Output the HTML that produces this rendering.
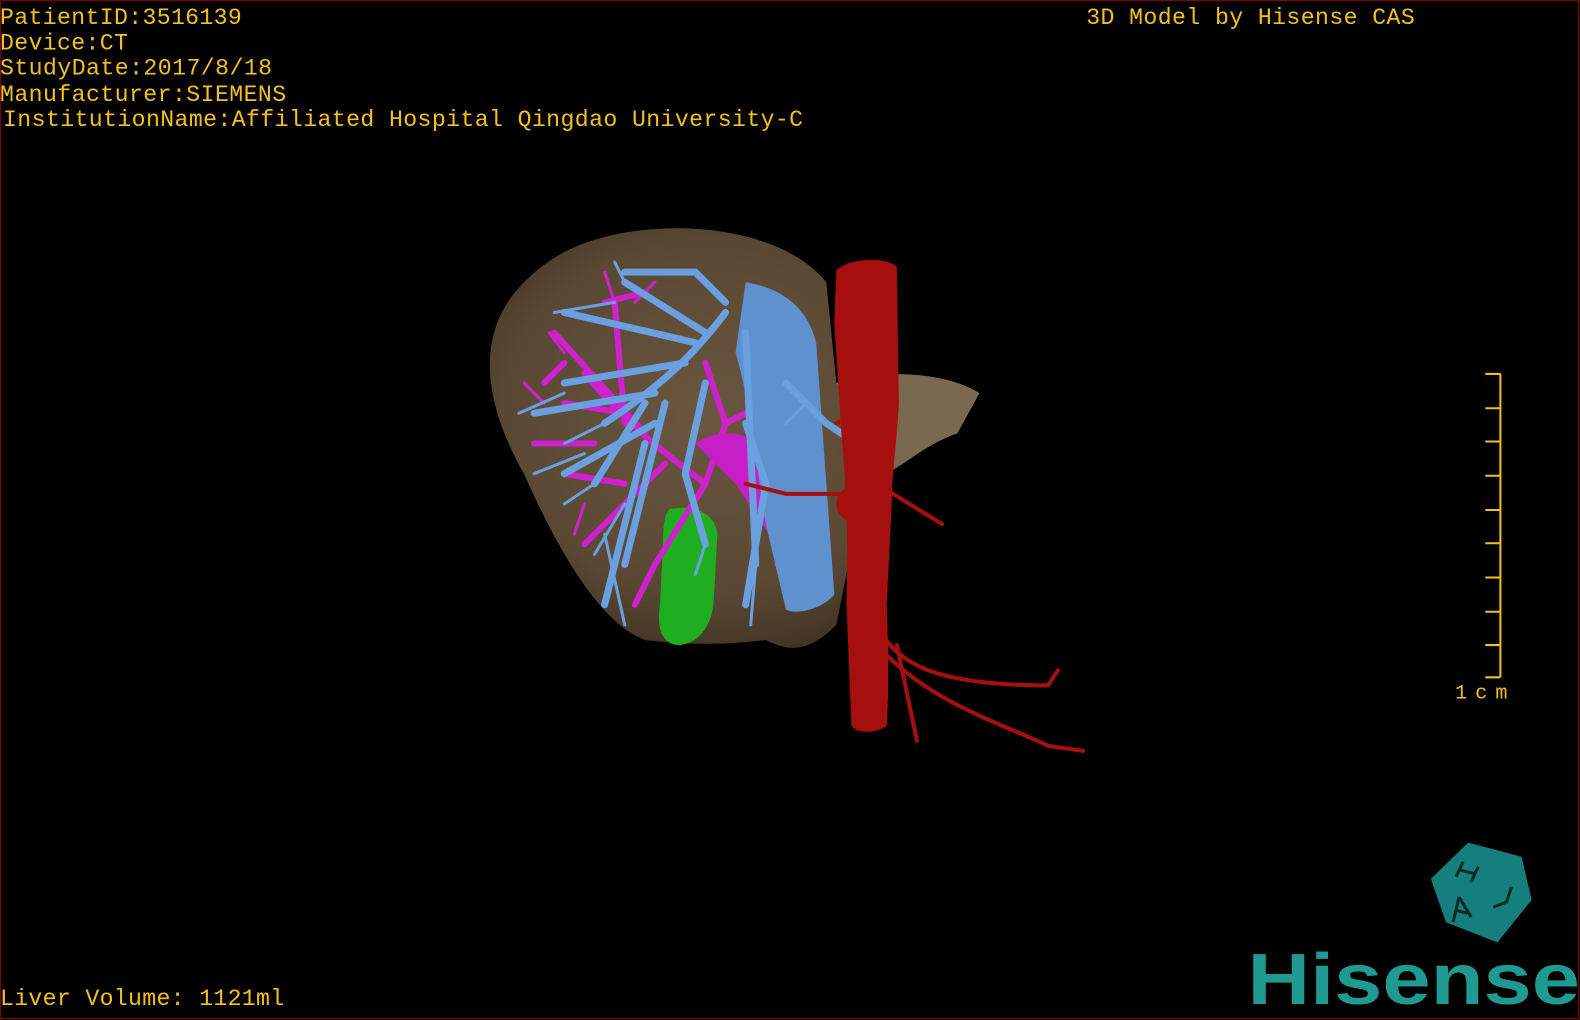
<!DOCTYPE html>
<html><head><meta charset="utf-8"><style>
html,body{margin:0;padding:0;background:#000;width:1580px;height:1020px;overflow:hidden}
svg{display:block}
</style></head><body>
<svg width="1580" height="1020" viewBox="0 0 1568 1012" preserveAspectRatio="none" xmlns="http://www.w3.org/2000/svg">
<defs>
<radialGradient id="lg" cx="0.45" cy="0.45" r="0.6">
<stop offset="0" stop-color="#6b5740"/>
<stop offset="0.7" stop-color="#5a4834"/>
<stop offset="1" stop-color="#3e3122"/>
</radialGradient>
</defs>
<rect x="0" y="0" width="1568" height="1012" fill="#000"/>
<rect x="0.5" y="0.5" width="1566" height="1010" fill="none" stroke="#6a0a0a" stroke-width="1.5"/>
<g font-family="Liberation Mono, monospace" font-size="23" fill="#f2c21b">
<text x="0" y="24" textLength="240">PatientID:3516139</text>
<text x="0" y="49" textLength="127">Device:CT</text>
<text x="0" y="74" textLength="270">StudyDate:2017/8/18</text>
<text x="0" y="100" textLength="284">Manufacturer:SIEMENS</text>
<text x="3" y="125" textLength="794">InstitutionName:Affiliated Hospital Qingdao University-C</text>
<text x="1078" y="24" textLength="326">3D Model by Hisense CAS</text>
<text x="0" y="997" textLength="282">Liver Volume: 1121ml</text>
<text x="1444" y="693" font-size="20" textLength="52">1cm</text>
</g>
<g stroke="#f2c21b" stroke-width="2" fill="none">
<path d="M1489 371V672"/>
<path d="M1474 371H1489M1474 405H1489M1474 438H1489M1474 472H1489M1474 506H1489M1474 539H1489M1474 573H1489M1474 607H1489M1474 640H1489M1474 672H1489"/>
</g>
<!-- liver -->
<path d="M600 235 C680 215 780 230 820 280 L830 380 C880 365 940 370 972 390 L950 430 C920 440 900 460 880 470 L850 520 830 620 C800 650 780 645 760 635 C720 640 680 640 640 635 C600 620 560 560 520 470 C480 400 470 330 520 280 C545 255 570 243 600 235Z" fill="url(#lg)"/>
<path d="M830 380 C880 365 940 370 972 390 L950 430 C920 440 900 460 885 465 Z" fill="#7a6850"/>
<!-- green -->
<path d="M665 505 C690 500 710 510 712 530 L708 600 C705 625 690 640 672 640 C655 638 652 620 655 600 L658 540 C658 520 660 508 665 505Z" fill="#1fae1f"/>
<!-- magenta vessels -->
<g stroke="#d020d0" stroke-width="6" fill="none" stroke-linecap="round">
<path d="M700 480 C660 450 620 420 580 370 M640 430 L550 330 M620 410 L560 400 M660 460 L600 520 L580 540 M620 480 L560 470 M700 480 L720 420 L760 400 M720 420 L700 360 M700 480 L650 560 L630 600 M760 500 L800 540 M740 440 L790 520 M600 300 L640 290 M560 360 L540 380 M620 420 L610 300 M590 440 L530 440"/>
</g>
<g stroke="#d020d0" stroke-width="3" fill="none" stroke-linecap="round">
<path d="M610 300 L600 270 M630 300 L650 280 M560 350 L545 330 M540 400 L520 380 M580 500 L570 530 M800 540 L810 560 M770 560 L790 600"/>
</g>
<path d="M690 440 C720 420 760 430 780 470 L800 540 L770 540 L730 480Z" fill="#c81ec8"/>
<!-- blue portal -->
<path d="M740 280 C770 285 800 300 810 340 L828 590 C815 605 790 610 780 605 L760 520 C750 460 745 400 730 350Z" fill="#5f91cf"/>
<g stroke="#6aa0e0" stroke-width="7" fill="none" stroke-linecap="round">
<path d="M720 310 C690 350 660 380 600 420 M700 330 L620 280 M690 340 L560 310 M680 360 L560 380 M650 390 L530 410 M640 400 L590 480 M660 400 L620 560 M650 420 L560 470 M640 440 L600 600 M700 380 L680 470 L700 540 M740 420 L760 480 L740 600 M780 380 L820 420 L850 440 M720 300 L690 270 L620 270 M740 330 L750 560"/>
</g>
<g stroke="#6aa0e0" stroke-width="3" fill="none" stroke-linecap="round">
<path d="M560 390 L515 410 M580 450 L530 470 M620 500 L590 550 M600 530 L620 620 M750 560 L745 620 M610 300 L550 310 M680 270 L640 270 M620 280 L610 260 M600 420 L560 440 M590 480 L560 500 M700 540 L690 570 M780 420 L800 400"/>
</g>
<!-- red aorta -->
<path d="M830 268 C845 255 882 255 890 265 L892 400 C890 440 885 470 885 500 L880 600 C882 650 882 690 880 720 C870 728 850 728 845 720 L840 600 C842 540 840 480 835 430 L828 320Z" fill="#a5100f"/>
<g stroke="#a5100f" stroke-width="4" fill="none" stroke-linecap="round">
<path d="M870 620 C890 660 930 680 1040 680 L1050 665 M880 650 C930 700 1000 720 1040 740 L1075 745 M890 640 L910 735 M870 480 L935 520 M840 490 L780 490 L740 480 M830 420 L850 410"/>
</g>
<circle cx="848" cy="500" r="18" fill="#a5100f"/>
<!-- logo cube -->
<path d="M1457 836 L1510 850 L1520 893 L1486 935 L1435 915 L1420 872Z" fill="#157f7d"/>
<g stroke="#0a2a2a" stroke-width="3" fill="none">
<path d="M1452 855 L1445 870 M1467 860 L1460 875 M1448 863 L1464 867 M1500 880 L1495 895 L1482 900 M1448 890 L1442 915 M1448 890 L1460 910 M1444 903 L1456 906"/>
</g>
<text x="1238" y="996" font-family="Liberation Sans, sans-serif" font-weight="bold" font-size="72" fill="#1e9a90" textLength="330" lengthAdjust="spacingAndGlyphs">Hisense</text>
</svg>
</body></html>
